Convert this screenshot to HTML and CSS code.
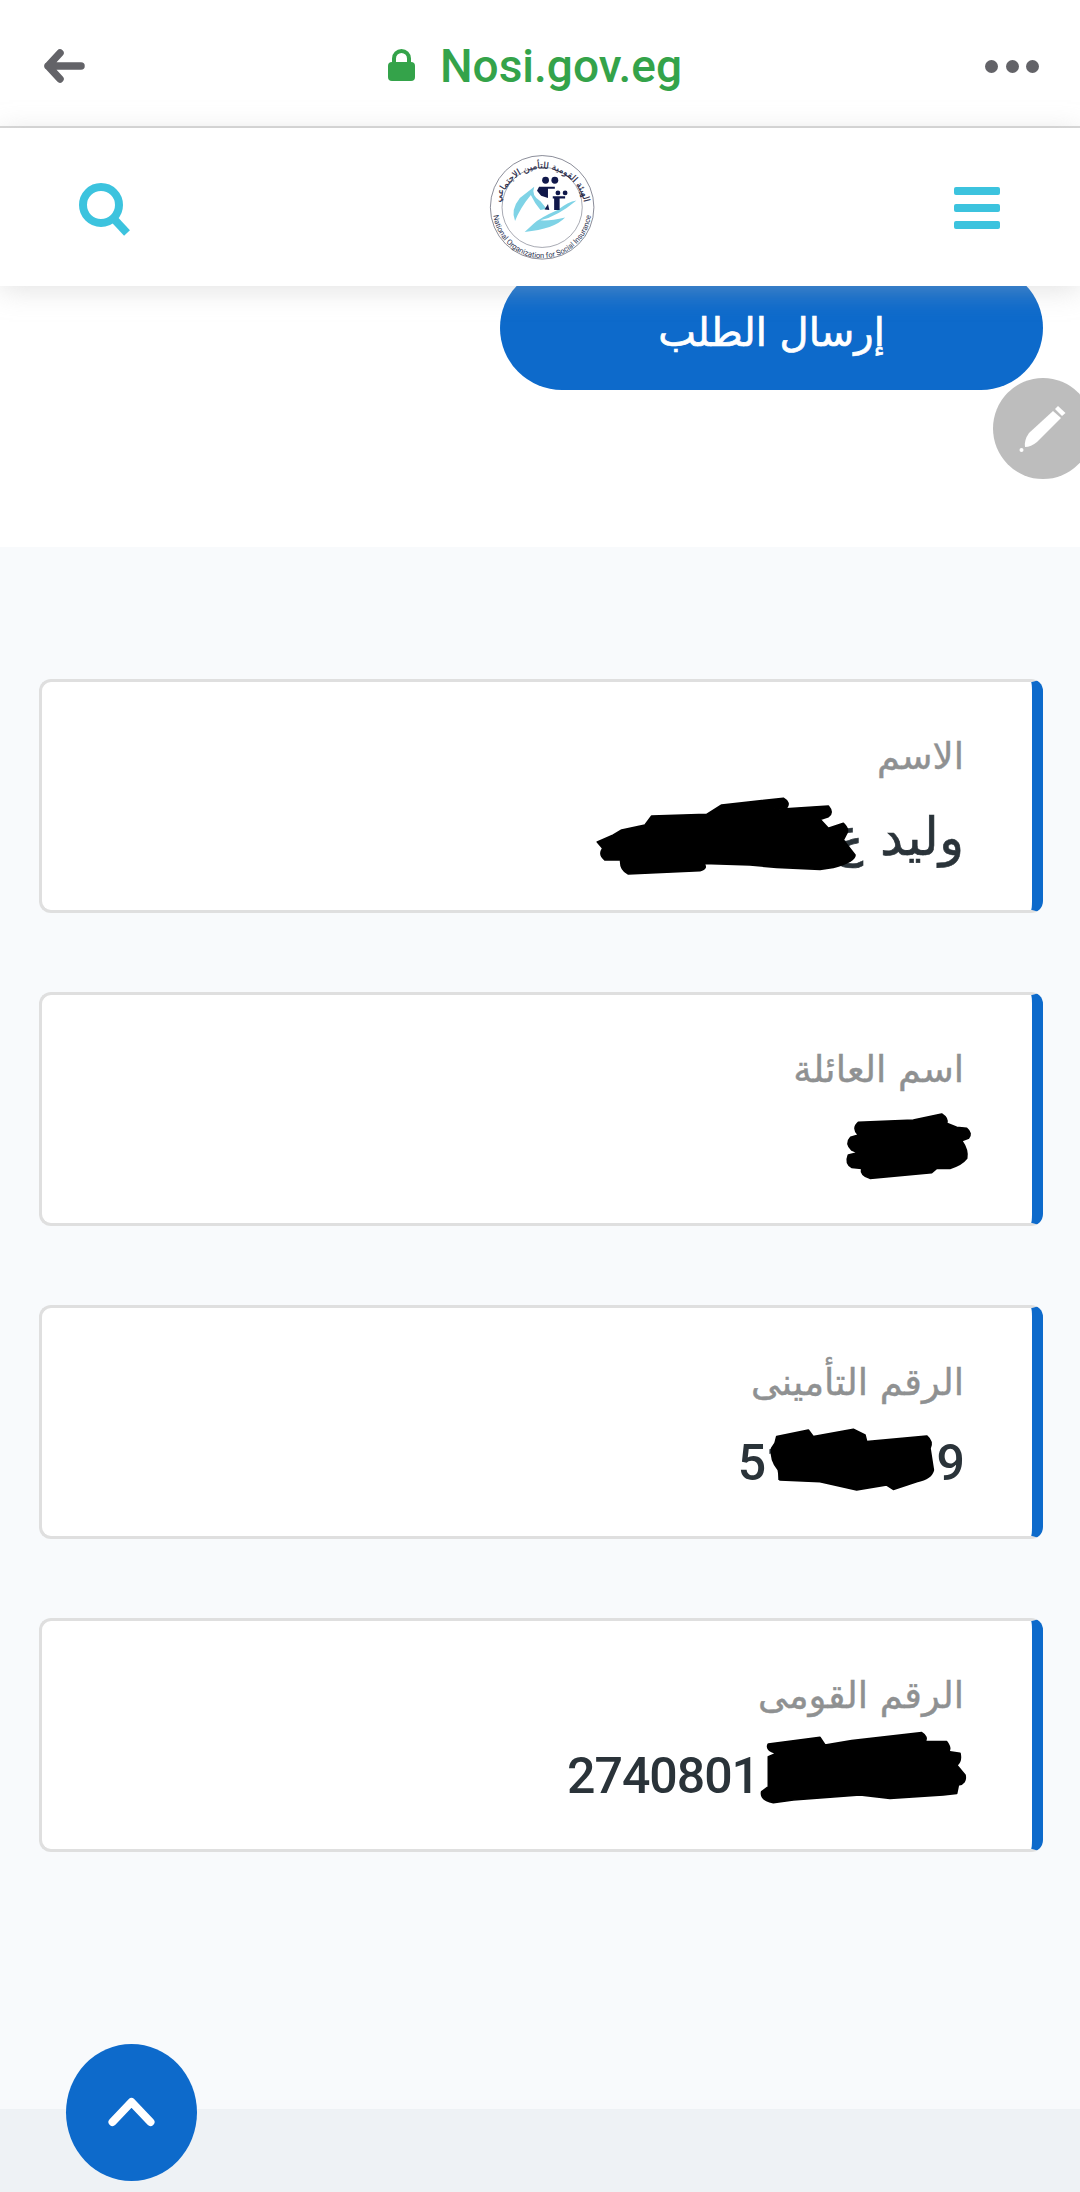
FILE: index.html
```html
<!DOCTYPE html>
<html lang="ar">
<head>
<meta charset="utf-8">
<title>Nosi.gov.eg</title>
<link rel="stylesheet" href="styles.css">
</head>
<body>
<div class="page">
  <div class="browser-bar">
    <svg class="icon-back" viewBox="0 0 42 34"><path d="M17 4 L5 17 L17 30 M5 17 H38"/></svg>
    <div class="address">
      <svg class="icon-lock" viewBox="0 0 27 32"><path class="shackle" d="M6 15 V9.500 A7.500 7.500 0 0 1 21 9.500 V15"/><rect class="lock-body" x="0" y="13" width="27" height="19" rx="4"/></svg>
      <span class="domain">Nosi.gov.eg</span>
    </div>
    <div class="dots"><i></i><i></i><i></i></div>
  </div>

  <header class="site-header">
    <svg class="icon-search" viewBox="0 0 52 53"><circle cx="22" cy="22" r="18"/><path d="M35 36 L48 50"/></svg>
    <svg class="logo" viewBox="150 80 315 305">
      <defs>
        <path id="arc-top" d="M180 244 A125 125 0 1 1 430 244"/>
        <path id="arc-bottom" d="M161 236 A144 144 0 0 0 449 236"/>
      </defs>
      <circle class="ring" cx="305" cy="232" r="151"/>
      <circle class="ring" cx="305" cy="232" r="117"/>
      <text class="logo-ar"><textPath href="#arc-top" startOffset="50%" text-anchor="middle">الهيئة القومية للتأمين الاجتماعي</textPath></text>
      <text class="logo-en"><textPath href="#arc-bottom" startOffset="50%" text-anchor="middle">National Organization for Social Insurance</textPath></text>
      <path class="hand" d="M282 172 Q272 198 300 214 L318 236 L300 240 Q282 218 272 196 Q240 235 226 272 Q212 240 240 205 Z"/>
      <path class="hand" d="M254 304 Q340 296 372 262 Q330 272 300 270 Q350 258 405 212 Q380 216 350 240 Q300 262 280 280 Z"/>
      <circle class="navy" cx="315" cy="153" r="10"/>
      <circle class="navy" cx="342" cy="153" r="10"/>
      <circle class="navy" cx="351" cy="190" r="7"/>
      <circle class="navy" cx="372" cy="190" r="7"/>
      <path class="navy" d="M296 172 H342 V178 H322 V205 L302 198 L290 184 Z"/>
      <path class="navy" d="M336 200 H372 V206 H356 V240 H340 V206 H336 Z"/>
      <path class="navy" d="M312 238 L322 222 L326 240 Z"/>
    </svg>
    <div class="burger"><i></i><i></i><i></i></div>
  </header>

  <section class="submit-row">
    <button class="submit" type="button">إرسال الطلب</button>
  </section>

  <main class="cards">
    <article class="card">
      <div class="label">الاسم</div>
      <div class="value value-text">وليد ع</div>
      <svg class="scribble s1" viewBox="0 0 1200 330"><path d="M52 186 L100 165 L125 150 L195 135 L215 108 L380 103 L425 75 L610 55 Q632 68 620 82 L560 90 L745 78 Q762 98 745 110 L720 118 L745 145 L790 130 Q808 148 800 160 L790 180 L825 225 Q825 245 760 262 L720 268 L590 262 L510 255 L370 250 Q385 265 360 272 L145 282 Q120 270 122 240 L75 240 Q55 225 68 205 Z"/></svg>
    </article>
    <article class="card">
      <div class="label">اسم العائلة</div>
      <div class="value"></div>
      <svg class="scribble s2" viewBox="0 0 510 330"><path d="M115 97 L280 90 L365 72 Q385 85 380 100 L410 112 L440 115 Q458 130 445 145 L425 152 Q445 180 440 205 Q425 225 390 235 L350 235 L335 248 L150 265 Q120 255 125 235 L95 232 Q75 220 85 195 L115 188 L95 180 Q75 160 92 142 L115 135 Q95 115 115 97 Z"/></svg>
    </article>
    <article class="card">
      <div class="label">الرقم التأمينى</div>
      <div class="value value-num">51<span class="gap gap-insurance"></span>9</div>
      <svg class="scribble s3" viewBox="0 0 720 300"><path d="M140 80 L235 60 L250 80 L370 58 L405 75 L410 95 L590 78 Q610 95 600 115 L610 180 Q605 205 560 215 L490 238 L470 225 L380 240 L270 215 L150 210 L145 180 Q120 150 125 115 L135 100 Z"/></svg>
    </article>
    <article class="card">
      <div class="label">الرقم القومى</div>
      <div class="value value-num">2740801<span class="gap gap-national"></span></div>
      <svg class="scribble s4" viewBox="0 0 720 300"><path d="M85 72 L240 52 L255 75 L335 62 L545 38 Q565 50 555 65 L620 65 Q635 85 625 95 L660 100 Q665 125 650 135 L675 165 Q680 190 655 195 L650 220 L610 225 L450 235 L360 225 L160 240 L100 248 Q60 240 65 215 L85 200 L85 180 L85 110 L110 100 Q75 90 85 72 Z"/></svg>
    </article>
  </main>

  <footer class="site-footer"></footer>

  <button class="fab-edit" type="button" aria-label="edit">
    <svg viewBox="0 0 100 101">
      <path d="M60 33 L68 40 L44 64 Q38 69 32 69 Q31 62 36 55 Z"/>
      <path d="M65 28 L72.500 35 L69 38 L62 31 Z"/>
      <circle cx="28.500" cy="72" r="2"/>
    </svg>
  </button>
  <button class="fab-top" type="button" aria-label="top">
    <svg viewBox="0 0 131 137"><path d="M46.500 78 L65.500 58 L84.500 78"/></svg>
  </button>
</div>
</body>
</html>
```

FILE: styles.css
```css
* { box-sizing: border-box; }
html, body { margin: 0; padding: 0; height: 2192px; overflow: hidden; background: #fff; }
body { font-family: Roboto, "DejaVu Sans", sans-serif; }

.page { position: relative; width: 1080px; height: 2192px; display: flex; flex-direction: column; overflow: hidden; }

.browser-bar {
  height: 128px; flex: none; display: flex; align-items: center; justify-content: space-between;
  padding: 6px 41px 0 43px; background: #fff; border-bottom: 2px solid #d8d8d8;
}
.icon-back { width: 42px; height: 34px; fill: none; stroke: #636368; stroke-width: 7.500; stroke-linecap: round; stroke-linejoin: round; }
.address { display: flex; align-items: center; gap: 25px; }
.icon-lock { width: 27px; height: 32px; margin-bottom: 3px; }
.shackle { fill: none; stroke: #34a34a; stroke-width: 4; }
.lock-body { fill: #34a34a; }
.domain { font: 500 46px/50px Roboto, sans-serif; color: #34a34a; }
.dots { display: flex; gap: 7.500px; }
.dots i { width: 13px; height: 13px; border-radius: 50%; background: #636368; }

.site-header {
  position: relative; z-index: 2; height: 158px; flex: none; display: flex; align-items: center; justify-content: space-between;
  padding: 0 80px 0 79px; background: #fff; box-shadow: 0 4px 26px rgba(185, 185, 185, .4);
}
.icon-search { width: 52px; height: 53px; margin-top: 5px; fill: none; stroke: #3cc3de; stroke-width: 8; }
.logo { width: 108px; height: 105px; }
.ring { fill: #fff; stroke: #55586a; stroke-width: 2; }
.ring + .ring { fill: none; stroke-width: 1.500; }
.logo-ar { font: 400 26px "DejaVu Sans", sans-serif; fill: #1b2140; stroke: #1b2140; stroke-width: .5; }
.logo-en { font: 400 22px Roboto, sans-serif; fill: #2c3350; }
.hand { fill: #7fd3e6; }
.navy { fill: #10184a; }
.burger { width: 46px; display: flex; flex-direction: column; gap: 9px; margin-top: 1px; }
.burger i { height: 8px; border-radius: 2px; background: #3cc3de; }

.submit-row { height: 261px; flex: none; display: flex; justify-content: flex-end; align-items: flex-start; padding-right: 37px; background: #fff; }
.submit {
  width: 543px; height: 124px; margin-top: -20px; padding: 8px 0 0; border: 0; border-radius: 62px; background: #0d6acb; color: #fff;
  font: 400 40px/1 "DejaVu Sans", sans-serif; direction: rtl; -webkit-text-stroke: .7px #fff;
}

.cards { flex: 1; display: flex; flex-direction: column; gap: 79px; padding: 132px 37px 0 39px; background: #f8fafc; }
.card {
  position: relative; height: 234px; flex: none; padding: 50px 68px 0 0; direction: rtl; background: #fff;
  border: 3px solid #dfdfdf; border-right: 11px solid #0d6acb; border-radius: 12px;
}
.label { height: 50px; font: 400 37px/50px "DejaVu Sans", sans-serif; color: #8f9192; -webkit-text-stroke: .4px #8f9192; }
.value { height: 60px; margin-top: 25px; font: 500 50px/60px Roboto, "DejaVu Sans", sans-serif; color: #2a3339; }
.value-text { font-size: 52px; font-family: "DejaVu Sans", sans-serif; font-weight: 400; -webkit-text-stroke: .6px #2a3339; }
.value-num { direction: ltr; text-align: right; letter-spacing: -1px; }
.gap { display: inline-block; height: 1px; }
.gap-insurance { width: 144px; }
.gap-national { width: 205px; }

.scribble { position: absolute; fill: #000; stroke: #000; stroke-width: 5; stroke-linejoin: round; }
.s1 { left: 538px; top: 98px; width: 400px; height: 110px; }
.s2 { left: 778px; top: 95px; width: 170px; height: 110px; }
.s3 { left: 688px; top: 102px; width: 240px; height: 100px; }
.s4 { left: 698px; top: 99px; width: 240px; height: 100px; }

.site-footer { height: 83px; flex: none; background: #eef2f5; }

.fab-edit { position: absolute; left: 993px; top: 378px; width: 100px; height: 101px; padding: 0; border: 0; border-radius: 50%; background: #bdbdbd; }
.fab-edit svg { display: block; width: 100px; height: 101px; fill: #fff; }
.fab-top { position: absolute; left: 66px; top: 2044px; width: 131px; height: 137px; padding: 0; border: 0; border-radius: 50%; background: #0d6acb; }
.fab-top svg { display: block; width: 131px; height: 137px; fill: none; stroke: #fff; stroke-width: 8; stroke-linecap: round; stroke-linejoin: round; }
```
